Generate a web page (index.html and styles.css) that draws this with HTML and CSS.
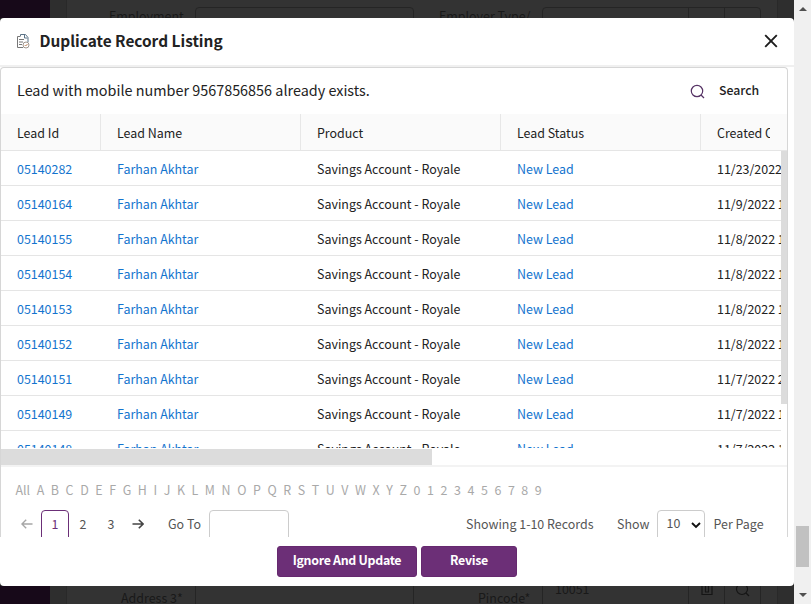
FILE: index.html
```html
<!DOCTYPE html>
<html lang="en">
<head>
<meta charset="utf-8">
<title>Duplicate Record Listing</title>
<link rel="stylesheet" href="styles.css">
</head>
<body>
<div class="page">
  <div class="strip strip-top">
    <div class="nav"></div><div class="gutter"></div>
    <div class="form">
      <span class="label label-employment">Employment</span><div class="field field-a"></div>
      <span class="label label-employer">Employer Type/</span>
      <div class="field field-b"><i class="main-part"></i><i></i><i></i></div>
    </div>
    <div class="gutter gutter-right"></div>
  </div>
  <section class="modal">
    <header class="modal-head">
      <svg class="doc-icon" width="14" height="16" viewBox="0 0 14 16" fill="none" stroke="#777" stroke-width="1"><path d="M4.500 3V1.500h5l2.500 3V9M8.500 1.500v3.500h3" stroke="#5c7488"/><path d="M4.500 3.500h-3v11h5.500M3 6.500h5M3 9h4M3 11.500h3"/><circle cx="10" cy="12" r="3" stroke="#a0968e"/><path d="m8.700 12 1 1 1.800-2" stroke="#c58a60"/></svg>
      <h1>Duplicate Record Listing</h1>
      <svg class="close" width="14" height="14" viewBox="0 0 14 14" stroke="#1c1c1c" stroke-width="1.900"><path d="m1.200 1.200 11.600 11.600M12.800 1.200 1.200 12.800"/></svg>
    </header>
    <div class="panel">
      <div class="message"><span class="message-text">Lead with mobile number 9567856856 already exists.</span>
        <svg width="15" height="15" viewBox="0 0 15 15" fill="none" stroke="#573466" stroke-width="1.200"><circle cx="7" cy="7" r="5.700"/><path d="m11 11 3 3"/></svg>
        <span class="search">Search</span>
      </div>
      <div class="columns"><span>Lead Id</span><span>Lead Name</span><span>Product</span><span>Lead Status</span><span class="last"><b>Created On</b></span></div>
      <div class="body">
        <div class="rows">
          <div class="row"><a>05140282</a><a>Farhan Akhtar</a><span>Savings Account - Royale</span><a>New Lead</a><span>11/23/2022 1</span></div>
          <div class="row"><a>05140164</a><a>Farhan Akhtar</a><span>Savings Account - Royale</span><a>New Lead</a><span>11/9/2022 1</span></div>
          <div class="row"><a>05140155</a><a>Farhan Akhtar</a><span>Savings Account - Royale</span><a>New Lead</a><span>11/8/2022 1</span></div>
          <div class="row"><a>05140154</a><a>Farhan Akhtar</a><span>Savings Account - Royale</span><a>New Lead</a><span>11/8/2022 1</span></div>
          <div class="row"><a>05140153</a><a>Farhan Akhtar</a><span>Savings Account - Royale</span><a>New Lead</a><span>11/8/2022 1</span></div>
          <div class="row"><a>05140152</a><a>Farhan Akhtar</a><span>Savings Account - Royale</span><a>New Lead</a><span>11/8/2022 1</span></div>
          <div class="row"><a>05140151</a><a>Farhan Akhtar</a><span>Savings Account - Royale</span><a>New Lead</a><span>11/7/2022 2</span></div>
          <div class="row"><a>05140149</a><a>Farhan Akhtar</a><span>Savings Account - Royale</span><a>New Lead</a><span>11/7/2022 1</span></div>
          <div class="row"><a>05140148</a><a>Farhan Akhtar</a><span>Savings Account - Royale</span><a>New Lead</a><span>11/7/2022 1</span></div>
        </div>
        <div class="vthumb"></div>
      </div>
      <div class="hbar"><div class="hthumb"></div></div>
      <nav class="alphabet"><span>All</span><span>A</span><span>B</span><span>C</span><span>D</span><span>E</span><span>F</span><span>G</span><span>H</span><span>I</span><span>J</span><span>K</span><span>L</span><span>M</span><span>N</span><span>O</span><span>P</span><span>Q</span><span>R</span><span>S</span><span>T</span><span>U</span><span>V</span><span>W</span><span>X</span><span>Y</span><span>Z</span><span>0</span><span>1</span><span>2</span><span>3</span><span>4</span><span>5</span><span>6</span><span>7</span><span>8</span><span>9</span></nav>
      <div class="pager">
        <svg width="12" height="10" viewBox="0 0 12 10" fill="none" stroke="#a6a6a6" stroke-width="1.400"><path d="M11.500 5H1M5.200.7.900 5l4.300 4.300"/></svg>
        <span class="current">1</span><span class="num">2</span><span class="num three">3</span>
        <svg class="next" width="12" height="10" viewBox="0 0 12 10" fill="none" stroke="#444" stroke-width="1.600"><path d="M.5 5H11M6.800.7 11.100 5 6.800 9.300"/></svg>
        <span class="goto">Go To</span><span class="goto-box"></span>
        <span class="showing">Showing 1-10 Records</span><span class="show">Show</span>
        <span class="select">10<svg width="10" height="7" viewBox="0 0 10 7" fill="none" stroke="#111" stroke-width="1.900"><path d="m1 1 4 4 4-4"/></svg></span>
        <span class="per">Per Page</span>
      </div>
    </div>
    <footer class="actions"><button class="ignore">Ignore And Update</button><button class="revise">Revise</button></footer>
  </section>
  <div class="strip strip-bottom">
    <div class="nav"></div><div class="gutter"></div>
    <div class="form">
      <span class="label label-address">Address 3*</span><div class="field field-c"></div>
      <span class="label label-pin">Pincode*</span>
      <div class="field field-d"><i class="main-part">10051</i><i><svg width="12" height="12" viewBox="0 0 12 12" fill="none" stroke="#151515" stroke-width="1.200"><path d="M1 0v8.500h10V0M4.500 0v6M7.500 0v6M4 6h4"/></svg></i><i><svg width="15" height="15" viewBox="0 0 15 15" fill="none" stroke="#151515" stroke-width="1.200"><circle cx="7" cy="6" r="5.500"/><path d="m11 10 3 3"/></svg></i></div>
    </div>
    <div class="gutter gutter-right"></div>
  </div>
</div>
<div class="scrollbar"><i class="up"></i><div class="thumb"></div><i class="down"></i></div>
</body>
</html>
```
FILE: styles.css
```css
* { box-sizing: border-box; }
body {
  margin: 0; width: 811px; height: 604px; display: flex; overflow: hidden;
  font: 12.45px/20px "Noto Sans CJK SC", "Open Sans", sans-serif; color: #222;
}
.page { width: 794px; height: 604px; display: grid; grid-template-rows: 18px 568px 18px; background: #222; }
.page > * { min-width: 0; min-height: 0; }

/* Dimmed form behind the dialog */
.strip { display: flex; overflow: hidden; height: 18px; }
.nav { width: 50px; background: #170919; }
.gutter { width: 16px; background: #2e2e2e; }
.gutter-right { width: 17px; border-left: 1px solid #292929; }
.form { width: 711px; height: 18px; display: flex; background: #333; border-left: 1px solid #292929; color: #191919; }
.label { height: 20px; white-space: nowrap; flex: none; }
.label-employment { width: 128px; padding-left: 42px; margin-top: 6px; }
.label-employer { width: 128px; padding-left: 25px; margin-top: 6px; }
.label-address { width: 128px; padding-left: 54px; margin-top: 2px; }
.label-pin { width: 128px; padding-left: 64px; margin-top: 2px; }
.field { flex: none; display: flex; border: 1px solid #252525; }
.field-a { width: 219px; height: 30px; margin-top: 7px; border-radius: 4px; }
.field-b { width: 219px; height: 30px; margin-top: 7px; border-radius: 4px; }
.field-c { width: 219px; height: 18px; border-width: 0 1px; }
.field-d { width: 219px; height: 18px; border-width: 0 1px; }
.field i { width: 36px; border-left: 1px solid #252525; font-style: normal; text-align: center; }
.field i.main-part { width: 145px; border: 0; padding-left: 12px; text-align: left; line-height: 7px; }
.field svg { display: block; margin: -3px auto 0; }
.field i:nth-child(2) svg { margin-top: 0; }

/* Dialog */
.modal { background: #fff; border-radius: 4px; display: flex; flex-direction: column; overflow: hidden; }
.modal-head { height: 49px; flex: none; display: flex; align-items: center; padding: 0 16px 2px; border-bottom: 2px solid #f0f0f0; }
.doc-icon { margin-right: 9.5px; }
.close { position: relative; top: .5px; }
h1 { margin: 0; padding-bottom: 1px; font-size: 15.4px; line-height: 24px; font-weight: 700; flex: 1; }
.panel { width: 788px; height: 470px; flex: none; border: 1px solid #d6d6d6; border-bottom: 0; border-radius: 4px 4px 0 0; overflow: hidden; }
.message { height: 46px; display: flex; align-items: center; padding-left: 16px; }
.message-text { font-size: 14.4px; width: 673px; padding-bottom: 2px; }
.search { margin-left: 14px; font-size: 12.3px; font-weight: 500; padding-bottom: 2px; }
.columns { height: 37px; display: flex; background: #fafafa; border-bottom: 1px solid #e5e5e5; }
.columns > span { width: 200px; padding: 9px 0 0 16px; border-right: 1px solid #e7e7e7; flex: none; }
.columns > span:first-child { width: 100px; }
.columns > .last { width: 86px; border: 0; }
.last b { display: block; width: 53px; overflow: hidden; white-space: nowrap; font-weight: 400; }
.body { height: 298px; display: flex; overflow: hidden; }
.rows { width: 780px; height: 297px; overflow: hidden; flex: none; }
.row { height: 35px; display: flex; border-bottom: 1px solid #e5e5e5; white-space: nowrap; }
.row > * { width: 200px; padding: 8px 0 0 16px; flex: none; }
.row > :first-child { width: 100px; }
.row a { color: #1374ce; }
.vthumb { width: 6px; height: 253px; background: #dcdcdc; }
.hbar { height: 18px; border-bottom: 2px solid #f3f3f3; }
.hthumb { width: 431px; height: 16px; background: #dcdcdc; }
.alphabet { height: 43px; padding: 13px 0 0 14.5px; display: flex; width: 541px; justify-content: space-between; color: #a9a9a9; }
.pager { height: 28px; display: flex; align-items: center; padding-left: 20px; color: #555; white-space: nowrap; }
.pager > * { flex: none; }
.current, .goto-box, .select { align-self: flex-start; height: 34px; border: 1px solid #ccc; border-radius: 4px; }
.current { width: 28px; margin-left: 8px; border-color: #6b2f77; color: #6b2f77; text-align: center; line-height: 27px; }
.num { width: 28px; text-align: center; }
.next { margin-left: 7px; }
.goto { width: 41px; margin-left: 24px; }
.goto-box { width: 80px; }
.goto, .showing, .show, .per { padding-bottom: 1px; }
.showing { margin-left: 177px; width: 151px; }
.show { width: 40px; }
.select { width: 48px; padding: 2px 3px 0 8.5px; display: flex; justify-content: space-between; }
.select svg { margin-top: 9px; }
.per { margin-left: 8.5px; }
.actions { display: flex; justify-content: center; gap: 4px; padding-top: 9px; }
button { height: 31px; padding: 0 0 3px; border: 1px solid #66296f; border-radius: 3px; background: #6c2f77; color: #fff; font: 700 12.4px "Noto Sans CJK SC", sans-serif; letter-spacing: -.3px; }
.ignore { width: 140px; }
.revise { width: 96px; }

/* Browser scrollbar */
.scrollbar { width: 17px; height: 604px; background: #f0f0f0; display: flex; flex-direction: column; align-items: center; }
.up { margin-top: 7px; border: 4px solid transparent; border-top: 0; border-bottom-color: #505050; }
.thumb { width: 13px; height: 41px; background: #c1c1c1; margin-top: 515px; }
.down { margin-top: 26px; border: 4px solid transparent; border-bottom: 0; border-top-color: #505050; }
```
